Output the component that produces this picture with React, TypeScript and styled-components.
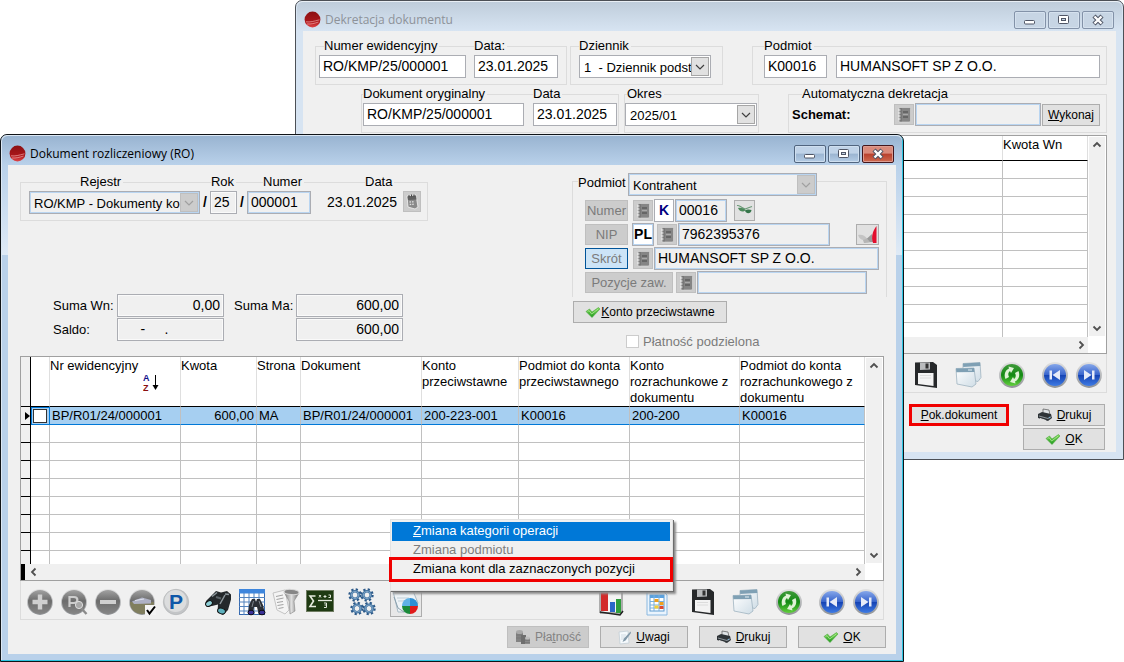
import React, { ReactNode } from "react";
import styled, { createGlobalStyle, css } from "styled-components";

const Global = createGlobalStyle`
  * { box-sizing: border-box; }
  html, body { margin: 0; background: #fff; }
  body, input, select, button, table {
    font-family: "Liberation Sans", Arial, sans-serif;
    font-size: 13px;
    color: #000;
  }
  input, select, button { margin: 0; border-radius: 0; }
`;

/* ---------- window chrome ---------- */

const Desktop = styled.main`
  position: relative;
  min-height: 100vh;
  min-width: 1100px;
  overflow: hidden;
`;

const WindowFrame = styled.section<{ $active?: boolean }>`
  position: absolute;
  display: flex;
  flex-direction: column;
  border: 1px solid ${(p) => (p.$active ? "#101418" : "#4c5056")};
  border-radius: 7px 7px 0 0;
  background: ${(p) => (p.$active ? "#b9d1ea" : "#d7e4f2")};
  ${(p) =>
    p.$active &&
    css`
      background-image: linear-gradient(#b9d1ea 25%, #dfeaf6 100%);
      background-size: 100% 120px;
      background-repeat: no-repeat;
      box-shadow: inset -1px -1px 0 #2cc4e0, inset 1px 1px 0 #dce8f4;
    `}
`;

const BackWindow = styled(WindowFrame)`
  top: 0;
  left: 295px;
  right: 0;
`;

const FrontWindow = styled(WindowFrame)`
  top: 134px;
  left: 0;
  right: 220px;
`;

const TitleBar = styled.header<{ $active?: boolean }>`
  display: flex;
  align-items: center;
  gap: 4px;
  height: 30px;
  padding: 6px 8px 0 7px;
  border-radius: 6px 6px 0 0;
  border-top: 1px solid ${(p) => (p.$active ? "#dce8f4" : "#e9eff5")};
  margin: 0 1px;
  background: ${(p) =>
    p.$active
      ? "linear-gradient(#99b4d1, #b9d1ea)"
      : "linear-gradient(#bfcddb, #d7e4f2)"};
`;

const Title = styled.h1<{ $active?: boolean }>`
  flex: 1;
  margin: 0;
  font: 400 12px/16px "Open Sans", "Noto Sans", sans-serif;
  color: ${(p) => (p.$active ? "#000" : "#8d9299")};
`;

const Controls = styled.div`
  display: flex;
  gap: 2px;
`;

const ControlButton = styled.button<{ $kind: "idle" | "live" | "close" }>`
  display: flex;
  align-items: center;
  justify-content: center;
  width: 32px;
  height: 18px;
  padding: 0;
  border-radius: 2px;
  border: 1px solid
    ${(p) => ({ idle: "#8392a8", live: "#51657f", close: "#43161c" })[p.$kind]};
  box-shadow: inset 0 0 0 1px
    ${(p) => ({ idle: "#d5e1ee", live: "#cfdfef", close: "#dd9c90" })[p.$kind]};
  background: ${(p) =>
    ({
      idle: "#c7d5e4",
      live: "linear-gradient(#c0d3e8 45%, #9bb5d1 50%, #b4cce5)",
      close: "linear-gradient(#d98a7b 45%, #b8402d 50%, #cf6a50)",
    })[p.$kind]};
`;

const Body = styled.div`
  display: flex;
  flex-direction: column;
  margin: 0 7px 7px;
  background: #f0f0f0;
`;

const BackBody = styled(Body)`
  padding: 15px 9px 2px 12px;
`;

const FrontBody = styled(Body)`
  padding: 16px 9px 6px 12px;
`;

/* ---------- form parts ---------- */

const Row = styled.div<{ $gap?: number }>`
  display: flex;
  gap: ${(p) => p.$gap ?? 0}px;
`;

const SecondRow = styled(Row)`
  padding: 9px 0 0 46px;
`;

const Group = styled.div<{ $width?: number; $pad: string; $gap?: number }>`
  display: flex;
  gap: ${(p) => p.$gap ?? 0}px;
  ${(p) => (p.$width ? `flex: 0 0 ${p.$width}px;` : "flex: 1;")}
  min-width: 0;
  padding: ${(p) => p.$pad};
  border: 1px solid #dcdcdc;
`;

const RegisterGroup = styled(Group)`
  flex: none;
`;

const FieldBox = styled.div<{ $width?: number }>`
  display: flex;
  flex-direction: column;
  ${(p) => (p.$width ? `flex: 0 0 ${p.$width}px;` : "flex: 1;")}
  min-width: 0;
  margin-top: -8px;
`;

const Unlabelled = styled(FieldBox)`
  margin-top: 8px;
`;

const Caption = styled.label<{ $align?: "center"; $indent?: number }>`
  align-self: ${(p) => (p.$align === "center" ? "center" : "flex-start")};
  height: 16px;
  line-height: 14px;
  margin-left: ${(p) => p.$indent ?? 0}px;
  padding-right: 2px;
  background: #f0f0f0;
  white-space: nowrap;
`;

type Tone = "plain" | "locked" | "sum" | "tinted";

const toneRules = css<{ $tone?: Tone }>`
  border: 1px solid #abadb3;
  background: ${(p) => (p.$tone === "locked" || p.$tone === "sum" ? "#f0f0f0" : "#fff")};
  box-shadow: ${(p) =>
    p.$tone === "locked" || p.$tone === "tinted"
      ? "inset 0 0 0 1px #b9d5f1"
      : p.$tone === "sum"
        ? "inset 0 0 0 1px #fafafa"
        : "none"};
`;

const TextBox = styled.input<{
  $tone?: Tone;
  $width?: number;
  $right?: boolean;
  $bold?: string;
}>`
  ${toneRules}
  height: 23px;
  padding: 0 3px 1px;
  min-width: 0;
  font-size: 14px;
  outline: none;
  ${(p) => (p.$width ? `flex: 0 0 ${p.$width}px; width: ${p.$width}px;` : "width: 100%;")}
  ${(p) => p.$right && "text-align: right;"}
  ${(p) => p.$bold && `font-weight: 700; color: ${p.$bold}; padding: 0; text-align: center;`}
`;

const Grow = styled(TextBox)`
  flex: 1;
`;

const SelectBox = styled.div<{ $tone?: Tone }>`
  ${toneRules}
  display: flex;
  width: 100%;
  height: 23px;
  padding: 1px;
`;

const NativeSelect = styled.select`
  appearance: none;
  flex: 1;
  width: 0;
  padding: 2px 0 0 3px;
  border: 0;
  outline: none;
  background: transparent;
  text-overflow: clip;
`;

const SelectArrow = styled.span<{ $off?: boolean }>`
  display: flex;
  align-items: center;
  justify-content: center;
  width: 18px;
  border: 1px solid ${(p) => (p.$off ? "#bfbfbf" : "#a6a6a6")};
  background: ${(p) => (p.$off ? "#cccccc" : "#e1e1e1")};
  color: ${(p) => (p.$off ? "#a0a0a0" : "#404040")};
`;

const Slash = styled.span`
  flex: 0 0 10px;
  padding-top: 9px;
  text-align: center;
  font-size: 14px;
  font-weight: 700;
  line-height: 20px;
`;

const DateText = styled.output`
  flex: 1;
  font-size: 14px;
  line-height: 22px;
`;

const IconButton = styled.button<{ $width?: number; $off?: boolean }>`
  display: flex;
  align-items: center;
  justify-content: center;
  flex: 0 0 ${(p) => p.$width ?? 20}px;
  height: 21px;
  padding: 0;
  border: 1px solid ${(p) => (p.$off ? "#bfbfbf" : "#adadad")};
  background: ${(p) => (p.$off ? "#cccccc" : "#e1e1e1")};
`;

const TagButton = styled.button<{ $width?: number; $on?: boolean }>`
  flex: 0 0 ${(p) => p.$width ?? 43}px;
  height: 21px;
  padding: 2px 0 0;
  border: 1px solid ${(p) => (p.$on ? "#005499" : "#bfbfbf")};
  background: ${(p) => (p.$on ? "#cce4f7" : "#cccccc")};
  color: #7b7b7b;
  line-height: 16px;
`;

const PushButton = styled.button<{ $width: number; $off?: boolean; $marked?: boolean }>`
  display: flex;
  align-items: center;
  justify-content: center;
  gap: ${(p) => (p.$width > 120 ? 0 : 4)}px;
  flex: 0 0 ${(p) => p.$width}px;
  width: ${(p) => p.$width}px;
  height: 22px;
  padding: 0;
  border: ${(p) => (p.$marked ? "3px solid #f00000" : `1px solid ${p.$off ? "#bfbfbf" : "#adadad"}`)};
  background: ${(p) => (p.$off ? "#cccccc" : "#e1e1e1")};
  color: ${(p) => (p.$off ? "#838383" : "#000")};
  font-size: 12px;
  white-space: nowrap;
`;

const SchemeRow = styled.div`
  display: flex;
  align-items: center;
  gap: 1px;
`;

const SchemeLabel = styled.label`
  flex: 0 0 101px;
  font-weight: 700;
`;

/* ---------- upper part of the document form ---------- */

const FormTop = styled.div`
  display: flex;
  justify-content: space-between;
  min-height: 175px;
`;

const LeftPane = styled.div`
  display: flex;
  flex-direction: column;
  justify-content: space-between;
  align-items: flex-start;
  padding: 1px 0 15px;
`;

const Sums = styled.div`
  display: grid;
  grid-template-columns: 64px 107px 72px 107px;
  row-gap: 1px;
  align-items: center;
  padding-left: 33px;
`;

const SumLabel = styled.label<{ $second?: boolean }>`
  padding-left: ${(p) => (p.$second ? 10 : 0)}px;
`;

const RightPane = styled.div`
  display: flex;
  flex-direction: column;
  align-items: flex-start;
  width: 315px;
`;

const PartyGroup = styled.div`
  align-self: stretch;
  padding-bottom: 3px;
  border: 1px solid #dcdcdc;
  border-bottom: 0;
`;

const PartyHead = styled.div`
  display: flex;
  align-items: center;
  width: 239px;
  margin: -9px 0 2px 5px;
`;

const PartyLabel = styled.label`
  flex: 0 0 50px;
  background: #f0f0f0;
  line-height: 18px;
  padding-bottom: 3px;
`;

const PartyRow = styled.div`
  display: flex;
  align-items: center;
  gap: 1px;
  height: 24px;
  padding: 0 7px 0 12px;
`;

const Gap = styled.span<{ $w?: number }>`
  ${(p) => (p.$w ? `flex: 0 0 ${p.$w}px;` : "flex: 1;")}
`;

const CheckLine = styled.label`
  display: flex;
  align-items: center;
  gap: 4px;
  margin: 11px 0 0 54px;
  color: #7b7b7b;
`;

const Tick = styled.input`
  appearance: none;
  flex: none;
  width: 13px;
  height: 13px;
  margin: 0;
  border: 1px solid #cccccc;
  background: #fff;
`;

const KontoButton = styled(PushButton)`
  margin: 4px 0 0 1px;
  flex: none;
`;

/* ---------- grids ---------- */

const GridFrame = styled.div`
  display: grid;
  grid-template-columns: minmax(0, 1fr) 18px;
  border: 1px solid #a0a0a0;
  background: #fff;
`;

const FrontArea = styled.div`
  margin-right: 3px;
`;

const BackArea = styled.div`
  padding-top: 2px;
`;

const DataTable = styled.table`
  width: 100%;
  table-layout: fixed;
  border-collapse: separate;
  border-spacing: 0;
  background: #fff;
`;

const HeadCell = styled.th<{ $selector?: boolean; $height: number }>`
  height: ${(p) => p.$height}px;
  padding: 1px 0 0;
  vertical-align: top;
  text-align: left;
  font-weight: 400;
  line-height: 16px;
  white-space: nowrap;
  border-right: 1px solid ${(p) => (p.$selector ? "#000" : "#dfdfdf")};
  border-bottom: 1px solid #000;
  background: ${(p) => (p.$selector ? "#f0f0f0" : "#fff")};
`;

const Cell = styled.td<{ $selected?: boolean; $last?: number | false; $right?: boolean }>`
  height: ${(p) => p.$last || 18}px;
  padding: 0 2px;
  line-height: 15px;
  white-space: nowrap;
  text-align: ${(p) => (p.$right ? "right" : "left")};
  border-right: 1px solid #c0c0c0;
  border-bottom: ${(p) => (p.$last ? 0 : 1)}px solid ${(p) => (p.$selected ? "#0078d7" : "#c0c0c0")};
  background: ${(p) => (p.$selected ? "#a6cff1" : "#fff")};
`;

const SelectorCell = styled(Cell)`
  padding: 0;
  border-right-color: #000;
  border-bottom-color: #000;
  background: #f0f0f0;
  text-align: right;
`;

const MarkCell = styled(Cell)`
  padding: 0;
  border: 1px solid #0078d7;
`;

const RowTick = styled.input`
  appearance: none;
  display: block;
  width: 14px;
  height: 14px;
  margin: 0 1px;
  border: 1px solid #333;
  background: #fff;
`;

const SortMark = styled.span`
  display: block;
  padding-right: 20px;
  text-align: right;
`;

const VScroll = styled.div`
  display: flex;
  flex-direction: column;
  justify-content: space-between;
  align-items: center;
  margin: 1px;
  padding: 3px 0;
  background: #f0f0f0;
`;

const HScroll = styled.div<{ $thumb?: boolean }>`
  display: flex;
  justify-content: space-between;
  align-items: center;
  height: 16px;
  padding: 0 2px 0 4px;
  border-left: ${(p) => (p.$thumb ? 4 : 0)}px solid #000;
  background: #f0f0f0;
`;

const ToolPanel = styled.div`
  display: flex;
  align-items: center;
  justify-content: space-between;
  height: 39px;
  padding: 4px 3px 0 5px;
  border: 1px solid #dcdcdc;
  border-top: 0;
`;

const Tools = styled.div<{ $gap: number }>`
  display: flex;
  align-items: center;
  gap: ${(p) => p.$gap}px;
`;

const RightTools = styled(Tools)`
  margin-left: auto;
`;

const ReportTools = styled(Tools)`
  padding-right: 3px;
`;

const ToolButton = styled.button`
  display: block;
  width: 28px;
  height: 28px;
  padding: 0;
  border: 0;
  background: transparent;
`;

const MenuAnchor = styled.div`
  position: relative;
  width: 32px;
  height: 30px;
`;

const MenuTrigger = styled(ToolButton)`
  width: 32px;
  height: 30px;
  border: 1px solid #adadad;
  background: #e8e8e8;
`;

const Menu = styled.ul`
  position: absolute;
  z-index: 2;
  left: 0;
  bottom: 26px;
  width: 283px;
  margin: 0;
  padding: 2px 2px 11px 1px;
  list-style: none;
  border: 1px solid #e3e3e3;
  background: #f0f0f0;
  box-shadow: 1px 1px 0 #6d6d6d, 3px 3px 2px #8d8d8d;
`;

const MenuItem = styled.button<{ $look?: "hot" | "off" | "marked" }>`
  display: block;
  width: 278px;
  height: 19px;
  padding: 0 0 2px 21px;
  border: 0;
  text-align: left;
  background: ${(p) => (p.$look === "hot" ? "#0078d7" : "transparent")};
  color: ${(p) => (p.$look === "hot" ? "#fff" : p.$look === "off" ? "#7d7d7d" : "#000")};
  outline: ${(p) => (p.$look === "marked" ? "3px solid #f00000" : "none")};
`;

const Footer = styled.div`
  display: flex;
  justify-content: flex-end;
  gap: 11px;
  padding: 6px 1px 0 0;
`;

const BackFooter = styled.div`
  display: grid;
  grid-template-columns: 100px 82px;
  justify-content: end;
  gap: 2px 14px;
  padding: 11px 2px 0 0;
`;

const SecondColumn = styled.div`
  grid-column: 2;
`;

/* ---------- icons ---------- */

const HiddenSvg = styled.svg`
  position: absolute;
`;

const Defs = () => (
  <HiddenSvg width="0" height="0" aria-hidden="true">
    <defs>
      <linearGradient id="gray" x1="0" y1="0" x2="0" y2="1">
        <stop offset="0" stopColor="#a2a2a2" />
        <stop offset="0.45" stopColor="#6c6c6c" />
        <stop offset="1" stopColor="#868686" />
      </linearGradient>
      <linearGradient id="rim" x1="0" y1="0" x2="0" y2="1">
        <stop offset="0" stopColor="#e2e2e2" />
        <stop offset="1" stopColor="#8f9296" />
      </linearGradient>
      <linearGradient id="blue" x1="0" y1="0" x2="0" y2="1">
        <stop offset="0" stopColor="#86a7ea" />
        <stop offset="0.48" stopColor="#3a66cd" />
        <stop offset="0.52" stopColor="#1644b4" />
        <stop offset="1" stopColor="#3e7be4" />
      </linearGradient>
      <linearGradient id="green" x1="0" y1="0" x2="0" y2="1">
        <stop offset="0" stopColor="#3f9a3a" />
        <stop offset="0.5" stopColor="#138a14" />
        <stop offset="1" stopColor="#62cf3d" />
      </linearGradient>
      <linearGradient id="red" x1="0" y1="0" x2="0" y2="1">
        <stop offset="0" stopColor="#8c1012" />
        <stop offset="0.6" stopColor="#a8161a" />
        <stop offset="1" stopColor="#e04548" />
      </linearGradient>
      <linearGradient id="check" x1="0" y1="0" x2="0" y2="1">
        <stop offset="0" stopColor="#7ed957" />
        <stop offset="1" stopColor="#1f9a1f" />
      </linearGradient>
      <linearGradient id="paper" x1="0" y1="0" x2="1" y2="1">
        <stop offset="0" stopColor="#ffffff" />
        <stop offset="1" stopColor="#cfdde6" />
      </linearGradient>
      <linearGradient id="funnel" x1="0" y1="0" x2="1" y2="0">
        <stop offset="0" stopColor="#7e7e7e" />
        <stop offset="0.5" stopColor="#dedede" />
        <stop offset="1" stopColor="#6c6c6c" />
      </linearGradient>
    </defs>
  </HiddenSvg>
);

const Icon = ({ size = 28, w, h, children }: { size?: number; w?: number; h?: number; children: ReactNode }) => (
  <svg
    width={w ?? size}
    height={h ?? size}
    viewBox={`0 0 ${w ?? size} ${h ?? size}`}
    aria-hidden="true"
  >
    {children}
  </svg>
);

const LogoIcon = () => (
  <Icon size={17}>
    <circle cx="8.5" cy="8.5" r="7.9" fill="url(#red)" />
    <path d="M2 10.800c4 .6 8-.6 13.500-2M3 13c4 .4 8-.8 11.500-2" fill="none" stroke="#f0a3a3" strokeWidth=".7" />
  </Icon>
);

const ChevronIcon = ({ dir = "down" }: { dir?: "down" | "up" | "left" | "right" }) => {
  const d = {
    down: "M1.500 3.500L5 7l3.500-3.500",
    up: "M1.500 6.500L5 3l3.500 3.500",
    left: "M6.500 1.500L3 5l3.500 3.500",
    right: "M3.500 1.500L7 5l-3.500 3.500",
  }[dir];
  return (
    <Icon size={10}>
      <path d={d} fill="none" stroke="#505050" strokeWidth="1.800" />
    </Icon>
  );
};

const ThinChevron = () => (
  <Icon w={10} h={8}>
    <path d="M1 2l4 4 4-4" fill="none" stroke="currentColor" strokeWidth="1.200" />
  </Icon>
);

const MinimizeIcon = () => (
  <Icon w={12} h={12}>
    <rect x=".5" y="6.500" width="10" height="3.500" rx="1" fill="#fff" stroke="#4f5565" />
  </Icon>
);

const MaximizeIcon = () => (
  <Icon w={12} h={12}>
    <rect x=".5" y="1.500" width="10" height="8" rx="1" fill="#fff" stroke="#4f5565" />
    <rect x="3.500" y="4.500" width="4" height="2" fill="#c3d2e3" stroke="#4f5565" />
  </Icon>
);

const CloseIcon = () => (
  <Icon w={12} h={12}>
    <path d="M2 2l8 8M10 2l-8 8" stroke="#4f5565" strokeWidth="4.400" />
    <path d="M2.500 2.500l7 7M9.500 2.500l-7 7" stroke="#fff" strokeWidth="2.400" />
  </Icon>
);

const BookIcon = () => (
  <Icon w={16} h={17}>
    <path d="M3 1.500h10.500l1 1v12.500l-1 1H3z" fill="#858585" stroke="#dedede" strokeWidth=".6" />
    <path d="M5 2v13.500" stroke="#6a6a6a" />
    <path d="M2 4h2.500M2 7h2.500M2 10h2.500M2 13h2.500" stroke="#f0f0f0" />
    <path d="M7 6h5M7 11h5" stroke="#5c5c5c" strokeWidth="1.500" />
    <path d="M7 8.500h5" stroke="#a8a8a8" />
  </Icon>
);

const CalendarIcon = () => (
  <Icon w={14} h={17}>
    <path d="M2 3l9-1 2 12-3 2-7-2z" fill="#8a8a8a" stroke="#f2f2f2" strokeWidth=".8" />
    <path d="M2.500 3.500l8.500-1 .5 4-8.500.5z" fill="#606060" />
    <path d="M4 2v2M6.500 1.500v2M9 1.500v2" stroke="#444" />
    <path d="M4.500 9l5-.3M4.700 11.500l5-.3" stroke="#dedede" strokeDasharray="1.500 1" strokeWidth="1.300" />
  </Icon>
);

const GlassesIcon = () => (
  <Icon w={18} h={14}>
    <path d="M1 2.500c2-.5 3 1 5 2l3 1.500c3-1 5-2 7-2.500" fill="none" stroke="#6c9a78" strokeWidth="1.100" />
    <path d="M2 5c3-.6 6 .4 7.500 2-1.500 2.400-6 2-7.500-2z" fill="#4d8a5c" />
    <path d="M9 7.500c2-1.500 5-1.200 6.500-.5-.5 4-5.500 4.500-6.500.5z" fill="#35754a" />
  </Icon>
);

const RegisterIcon = () => (
  <Icon w={21} h={19}>
    <path d="M1 10c4-1 7 1 9 3.500-2 3-7 2-9-3.500z" fill="#c4c4c4" />
    <path d="M10 13.500l5-4.500 1 8-9 .5z" fill="#9a9a9a" />
    <path d="M6 15l4-1.500L13 17l-6 1z" fill="#b5b5b5" />
    <path d="M19.500 1v17h-3.500c-2-6-.5-12 3.500-17z" fill="#e20d2c" />
  </Icon>
);

const CheckIcon = () => (
  <Icon w={16} h={13}>
    <path d="M1 5.500l3.500-2.500 2.500 3L13.500 1.500l1.500 1.500L7 11.500z" fill="url(#check)" stroke="#4fa83f" strokeWidth=".6" />
    <path d="M2.500 5.600l1.500-1L6.700 8l6.500-5" fill="none" stroke="#b4eb98" strokeWidth=".8" />
  </Icon>
);

const PrinterIcon = () => (
  <Icon w={16} h={14}>
    <path d="M6 1l6 1 1 5-7-1z" fill="#dfe3e6" stroke="#555" strokeWidth=".7" />
    <path d="M1 6l4-2 9 2 1 4-4 3-10-3z" fill="#2f3438" />
    <path d="M2 8l9 2.500 3.500-2" fill="none" stroke="#8f979c" />
    <path d="M3 10.500l6 2" stroke="#e5e5e5" />
    <circle cx="12.500" cy="9.500" r=".8" fill="#7fb4d8" />
  </Icon>
);

const CoinsIcon = () => (
  <Icon w={16} h={17}>
    <path d="M1 3h7v10H1z" fill="#838383" />
    <ellipse cx="4.500" cy="3" rx="3.500" ry="2" fill="#a9a9a9" />
    <path d="M6 6h5v9H6z" fill="#6e6e6e" />
    <path d="M10 9h5v6h-5z" fill="#8a8a8a" />
    <ellipse cx="12.500" cy="9" rx="2.500" ry="1.500" fill="#bdbdbd" />
    <path d="M1 6h7M1 9h7M10 11.500h5M10 13.500h5" stroke="#727272" strokeWidth=".7" />
  </Icon>
);

const NoteIcon = () => (
  <Icon w={14} h={16}>
    <path d="M1 3l9-1 1 12-9 1z" fill="#f5f9fc" stroke="#c3ced6" strokeWidth=".8" />
    <path d="M3 6h5M3 8h4M3 10h4" stroke="#c9d5de" strokeWidth=".8" />
    <path d="M4.500 13l1.500-3.500L12.500 2.500l.5 1.500L7.500 11.500z" fill="#8399a9" />
  </Icon>
);

const Disc = ({ fill }: { fill?: string }) => (
  <>
    <circle cx="14" cy="14" r="12.900" fill="url(#rim)" />
    <circle cx="14" cy="14" r={fill ? 11 : 12} fill={fill ?? "url(#gray)"} />
  </>
);

const AddIcon = () => (
  <Icon>
    <Disc />
    <path d="M11.800 6.500h4.400v5.300h5.300v4.400h-5.300v5.300h-4.400v-5.300H6.500v-4.400h5.300z" fill="#cfcfcf" />
  </Icon>
);

const FindIcon = () => (
  <Icon>
    <Disc />
    <path d="M9.500 19V9h4.500c4.500 0 4.500 6 0 6h-4" fill="none" stroke="#cdcdcd" strokeWidth="2.200" />
    <circle cx="19" cy="17" r="3.600" fill="#a9a9a9" stroke="#dedede" />
    <path d="M21.500 20.500l5 5.500" stroke="#8b8b8b" strokeWidth="2.400" />
  </Icon>
);

const RemoveIcon = () => (
  <Icon>
    <Disc />
    <path d="M6 12h16v4H6z" fill="#cfcfcf" />
  </Icon>
);

const RemoveMarkedIcon = () => (
  <Icon>
    <Disc />
    <path d="M2 14h24c0 7-5 12-12 12S2 21 2 14z" fill="#807e5e" />
    <path d="M4 13.500l10-4 9 2.500v3.500l-17 .5z" fill="#aeb1c4" />
    <path d="M7 12.500l9-1.500" stroke="#dfe2ee" />
    <rect x="17" y="17" width="11" height="10" fill="#f4f4f4" />
    <path d="M19 22l2.500 3.500L27 18.500" fill="none" stroke="#000" strokeWidth="2" />
  </Icon>
);

const LetterText = styled.text`
  font-family: "Liberation Sans", Arial, sans-serif;
  font-weight: 700;
`;

const ParkIcon = () => (
  <Icon>
    <circle cx="14" cy="14" r="12.700" fill="#c3c5c7" stroke="#aeb0b2" strokeWidth=".6" />
    <circle cx="13.500" cy="13" r="11" fill="#dcddde" />
    <LetterText x="7" y="21" fontSize="21" fill="#0f57a8">P</LetterText>
  </Icon>
);

const BinocularsIcon = () => (
  <Icon>
    <path d="M2 13L12 3l5 1.500L23 3l4 3.500v5L24 22l-5 5-5.500-3 .5-7.500-6 1.500-5 .5-1.500-3z" fill="#24282b" />
    <path d="M8 8.500l5-4M21 6l4 .5M16 16l5-9" stroke="#8d979d" strokeWidth="1.500" />
    <path d="M12 9l5 1.500" stroke="#5a6267" strokeWidth="2" />
    <ellipse cx="5" cy="15.500" rx="3.600" ry="2.600" fill="#8fd0d8" stroke="#111" transform="rotate(-30 5 15.500)" />
    <ellipse cx="17.500" cy="23" rx="4" ry="2.800" fill="#5eb0bd" stroke="#111" transform="rotate(20 17.500 23)" />
  </Icon>
);

const TableFindIcon = () => (
  <Icon>
    <rect x="1.500" y="1.500" width="25" height="25" fill="#fff" stroke="#3569b0" />
    <rect x="1" y="1" width="26" height="4.500" fill="#3e86dd" />
    <path d="M6 5v22M11 5v22M16 5v22M21 5v22M1 9.500h26M1 14h26M1 18.500h26M1 23h26" stroke="#5383bd" />
    <path d="M10 26l1-9 3-6h3l1 3 1-3h3l3 6 2 9-6 1-2-8-3 0-1 7z" fill="#2b2f35" />
    <ellipse cx="13" cy="24.500" rx="3" ry="2.300" fill="#3a3199" stroke="#0d0d15" />
    <ellipse cx="24" cy="24.500" rx="3" ry="2.300" fill="#3a3199" stroke="#0d0d15" />
    <path d="M15.500 13l-1.500 6M21 13l2 6" stroke="#7d858c" />
  </Icon>
);

const FilterIcon = () => (
  <Icon>
    <path d="M1 5l12-3 4 20-4 4-8-4z" fill="#f4f4f4" stroke="#c4c4c4" />
    <path d="M4 8.500l7-1.500M4.500 11.500l7-1.500M5 14.500l6-1M5.500 17.500l6-1M6.500 20.500l5-1" stroke="#a2a2a2" />
    <path d="M12 4l15 1-5 8 1 10-5 3-1-13z" fill="url(#funnel)" stroke="#868686" strokeWidth=".6" />
    <ellipse cx="19.500" cy="4" rx="7.500" ry="2.600" fill="#868686" stroke="#d8d8d8" transform="rotate(4 19.500 4)" />
  </Icon>
);

const FormulaIcon = () => (
  <Icon>
    <rect x=".5" y="2.500" width="27" height="21" fill="#1e3a12" stroke="#6f7c62" />
    <path d="M9.500 8H4l3.500 5L4 18.500h6" fill="none" stroke="#e6ebdf" strokeWidth="1.600" />
    <path d="M12 12.500h14" stroke="#e6ebdf" strokeWidth="1.300" />
    <path d="M13 7l2 2.500M15 7l-2 2.500M17.500 8.500h3M19 7v3M22.500 7h2v2.500h-2M18 15h2.500v2H18.500M20.500 17v2.500H18" fill="none" stroke="#dfe6d8" />
  </Icon>
);

const Gear = ({ x, y }: { x: number; y: number }) => (
  <g transform={`translate(${x} ${y})`}>
    <circle r="5.600" fill="none" stroke="#2b5888" strokeWidth="2.200" strokeDasharray="2.200 2.200" />
    <circle r="3.700" fill="none" stroke="#3f719f" strokeWidth="2.600" />
    <circle r="3.600" fill="none" stroke="#9dbcd8" strokeWidth=".7" />
  </g>
);

const GearsIcon = () => (
  <Icon>
    <Gear x={7} y={7} />
    <Gear x={19} y={7} />
    <Gear x={9} y={20.5} />
    <Gear x={21} y={20.5} />
  </Icon>
);

const ReportIcon = () => (
  <Icon w={30} h={28}>
    <path d="M2 3h20l5 12-6 9H7z" fill="#eef3f6" stroke="#a9bac5" />
    <path d="M6 10h12M7 13h9" stroke="#c1ced6" />
    <path d="M3 9l4 11 6 4" fill="none" stroke="#8ba1ae" />
    <path d="M19 18v-8a8 8 0 0 0-8 8z" fill="#5fb2e6" />
    <path d="M19 18v-8a8 8 0 0 1 8 8z" fill="#2d8fd5" />
    <path d="M19 18h-8a8 8 0 0 0 8 8z" fill="#1a8a3a" />
    <path d="M19 18h8a8 8 0 0 1-8 8z" fill="#e01a1a" />
  </Icon>
);

const ChartIcon = () => (
  <Icon>
    <path d="M2 2l22 1v22L2 25z" fill="#f4f4f4" stroke="#6a6a6a" />
    <path d="M3 3h7v20H3z" fill="#d22a2a" />
    <path d="M12 14h5v10h-5z" fill="#2c67c9" />
    <path d="M18 11h5v14h-5z" fill="#2f9e3d" />
    <path d="M2 24l20 3 3-4" fill="none" stroke="#222" strokeWidth="1.500" />
  </Icon>
);

const SheetIcon = () => (
  <Icon>
    <path d="M4 1h14l6 6v20H4z" fill="#eaf4fd" stroke="#8ab8e0" />
    <rect x="7" y="7" width="14" height="16" fill="#fff" stroke="#5f9bd0" />
    <path d="M7 7h14v3H7z" fill="#5aa2e0" />
    <path d="M7 13.500h14M7 17h14M7 20h14M11 7v16M16 7v16" stroke="#78b0df" />
    <path d="M11.500 11h4v3h-4zM16.500 14h4v3h-4z" fill="#f0a01c" />
    <path d="M16.500 18h4v3h-4z" fill="#e0482e" />
    <path d="M11.500 17.500h4v3h-4z" fill="#f5cf35" />
  </Icon>
);

const SaveIcon = () => (
  <Icon>
    <path d="M3 1.500l18-.5 4 3v23L3 24z" fill="#26282a" />
    <path d="M8 1.500h10v7L8 9z" fill="#b9bbbd" />
    <path d="M13.500 2.500h3v5h-3z" fill="#333" />
    <path d="M6 12h15.500v13L6 23z" fill="#f3f3f3" />
    <path d="M8 14.500h11M8 17h11" stroke="#dcdcdc" />
  </Icon>
);

const WindowsIcon = () => (
  <Icon>
    <path d="M8 2.500l17-1 1 15-3 4-15-3z" fill="url(#paper)" stroke="#9fb4c0" strokeWidth=".8" />
    <path d="M8 2.500l17-1 .3 3.500L8.200 6z" fill="#7fa0b4" />
    <path d="M1 7.500l18-.5 2 16-4 3-15-3z" fill="url(#paper)" stroke="#9fb4c0" strokeWidth=".8" />
    <path d="M1 7.500l18-.5.500 4-18.200.3z" fill="#7fa0b4" />
    <path d="M13 9h4" stroke="#e4eef4" />
  </Icon>
);

const RefreshIcon = () => (
  <Icon>
    <Disc fill="url(#green)" />
    <path d="M7.500 18c-2-5 0-9 3.500-10.500l-.5-2 5.500 1.500-3 5-1-2c-1.500 1-2.500 3-1 6z" fill="#dff2d6" />
    <path d="M20.500 10c2 5 0 9-3.500 10.500l.5 2-5.500-1.500 3-5 1 2c1.500-1 2.500-3 1-6z" fill="#dff2d6" />
  </Icon>
);

const SkipIcon = ({ forward }: { forward?: boolean }) => (
  <Icon>
    <Disc fill="url(#blue)" />
    <g transform={forward ? "translate(28 0) scale(-1 1)" : undefined}>
      <path d="M8.500 9.500h2.500v9H8.500zM19 9v10l-7.500-5z" fill="#e6ebf8" />
    </g>
  </Icon>
);

const SortIcon = () => (
  <Icon w={17} h={18}>
    <LetterText x="0" y="7" fontSize="9" fill="#10108a">A</LetterText>
    <LetterText x="0" y="17" fontSize="9" fill="#8a1010">Z</LetterText>
    <path d="M12.500 1v13" stroke="#000" />
    <path d="M9.500 11h6l-3 5z" fill="#000" />
  </Icon>
);

const PointerIcon = () => (
  <Icon w={5} h={8}>
    <path d="M0 0l5 4-5 4z" fill="#000" />
  </Icon>
);

/* ---------- composed parts ---------- */

const WindowControls = ({ active }: { active?: boolean }) => (
  <Controls>
    <ControlButton $kind={active ? "live" : "idle"} aria-label="Minimalizuj"><MinimizeIcon /></ControlButton>
    <ControlButton $kind={active ? "live" : "idle"} aria-label="Maksymalizuj"><MaximizeIcon /></ControlButton>
    <ControlButton $kind={active ? "close" : "idle"} aria-label="Zamknij"><CloseIcon /></ControlButton>
  </Controls>
);

type FieldProps = {
  id: string;
  label: string;
  value?: string;
  width?: number;
  indent?: number;
  align?: "center";
  tone?: Tone;
  children?: ReactNode;
};

const Field = ({ id, label, value, width, indent, align, tone, children }: FieldProps) => (
  <FieldBox $width={width}>
    <Caption htmlFor={id} $indent={indent} $align={align}>{label}</Caption>
    {children ?? <TextBox id={id} defaultValue={value} $tone={tone} />}
  </FieldBox>
);

const DropDown = ({ id, value, locked }: { id: string; value: string; locked?: boolean }) => (
  <SelectBox $tone={locked ? "locked" : "plain"}>
    <NativeSelect id={id}>
      <option>{value}</option>
    </NativeSelect>
    <SelectArrow $off={locked}><ThinChevron /></SelectArrow>
  </SelectBox>
);

const BookButton = () => (
  <IconButton $off aria-label="Wybierz z listy"><BookIcon /></IconButton>
);

const Key = ({ text }: { text: string }) => {
  const at = text.indexOf("_");
  return (
    <span>
      {text.slice(0, at)}
      <u>{text[at + 1]}</u>
      {text.slice(at + 2)}
    </span>
  );
};

const Tool = ({ label, children }: { label: string; children: ReactNode }) => (
  <ToolButton aria-label={label}>{children}</ToolButton>
);

const NavigationTools = () => (
  <>
    <Tool label="Zapisz"><SaveIcon /></Tool>
    <Tool label="Okna"><WindowsIcon /></Tool>
    <Tool label="Odśwież"><RefreshIcon /></Tool>
    <Tools $gap={6}>
      <Tool label="Pierwszy"><SkipIcon /></Tool>
      <Tool label="Ostatni"><SkipIcon forward /></Tool>
    </Tools>
  </>
);

const PostingHeader = () => (
  <>
    <Row $gap={3}>
      <Group $width={252} $pad="0 3px 6px 3px" $gap={8}>
        <Field id="ewid" label="Numer ewidencyjny" value="RO/KMP/25/000001" width={147} indent={5} />
        <Field id="data1" label="Data:" value="23.01.2025" width={84} />
      </Group>
      <Group $width={153} $pad="0 8px 6px 8px">
        <Field id="dziennik" label="Dziennik" width={132}>
          <DropDown id="dziennik" value={"1\u00a0 - Dziennik podstawowy"} />
        </Field>
      </Group>
      <Gap $w={23} />
      <Group $pad="0 6px 6px 11px" $gap={9}>
        <Field id="podmiot" label="Podmiot" value="K00016" width={63} />
        <Unlabelled>
          <TextBox aria-label="Nazwa podmiotu" defaultValue="HUMANSOFT SP Z O.O." />
        </Unlabelled>
      </Group>
    </Row>
    <SecondRow $gap={5}>
      <Group $width={258} $pad="0 1px 6px 1px" $gap={9}>
        <Field id="oryg" label="Dokument oryginalny" value="RO/KMP/25/000001" width={161} />
        <Field id="data2" label="Data" value="23.01.2025" width={84} />
      </Group>
      <Group $width={135} $pad="0 1px 6px 0">
        <Field id="okres" label="Okres" width={132} indent={2}>
          <DropDown id="okres" value="2025/01" />
        </Field>
      </Group>
      <Gap $w={19} />
      <Group $pad="0 6px 6px 3px">
        <FieldBox>
          <Caption as="span" $indent={10}>Automatyczna dekretacja</Caption>
          <SchemeRow>
            <SchemeLabel htmlFor="schemat">Schemat:</SchemeLabel>
            <BookButton />
            <Grow id="schemat" $tone="locked" />
            <PushButton $width={58}><Key text="_Wykonaj" /></PushButton>
          </SchemeRow>
        </FieldBox>
      </Group>
    </SecondRow>
  </>
);

const PostingWindow = () => (
  <BackWindow>
    <TitleBar>
      <LogoIcon />
      <Title>Dekretacja dokumentu</Title>
      <WindowControls />
    </TitleBar>
    <BackBody>
      <PostingHeader />
      <BackArea>
        <GridFrame>
          <DataTable>
            <colgroup>
              <col />
              <col width={85} />
            </colgroup>
            <thead>
              <tr>
                <HeadCell $height={25} aria-label="Opis" />
                <HeadCell $height={25}>Kwota Wn</HeadCell>
              </tr>
            </thead>
            <tbody>
              {Array.from({ length: 10 }, (_, i) => (
                <tr key={i}>
                  <Cell $last={i === 9 && 14} />
                  <Cell $last={i === 9 && 14} />
                </tr>
              ))}
            </tbody>
          </DataTable>
          <VScroll><ChevronIcon dir="up" /><ChevronIcon /></VScroll>
          <HScroll><ChevronIcon dir="left" /><ChevronIcon dir="right" /></HScroll>
        </GridFrame>
        <ToolPanel>
          <RightTools $gap={15}><NavigationTools /></RightTools>
        </ToolPanel>
      </BackArea>
      <BackFooter>
        <PushButton $width={100} $marked><Key text="_Pok.dokument" /></PushButton>
        <PushButton $width={82}><PrinterIcon /><Key text="_Drukuj" /></PushButton>
        <SecondColumn>
          <PushButton $width={82}><CheckIcon /><Key text="_OK" /></PushButton>
        </SecondColumn>
      </BackFooter>
    </BackBody>
  </BackWindow>
);

const columns: { width?: number; lines: string[]; value: string; right?: boolean }[] = [
  { width: 131, lines: ["Nr ewidencyjny"], value: "BP/R01/24/000001" },
  { width: 76, lines: ["Kwota"], value: "600,00", right: true },
  { width: 44, lines: ["Strona"], value: "MA" },
  { width: 121, lines: ["Dokument"], value: "BP/R01/24/000001" },
  { width: 97, lines: ["Konto", "przeciwstawne"], value: "200-223-001" },
  { width: 111, lines: ["Podmiot do konta", "przeciwstawnego"], value: "K00016" },
  { width: 110, lines: ["Konto", "rozrachunkowe z", "dokumentu"], value: "200-200" },
  { lines: ["Podmiot do konta", "rozrachunkowego z", "dokumentu"], value: "K00016" },
];

const PositionsTable = () => (
  <DataTable>
    <colgroup>
      <col width={10} />
      <col width={19} />
      {columns.map((c, i) => <col key={i} width={c.width} />)}
    </colgroup>
    <thead>
      <tr>
        <HeadCell $height={50} $selector aria-label="Wiersz" />
        <HeadCell $height={50} aria-label="Zaznaczenie" />
        {columns.map((c, i) => (
          <HeadCell key={i} $height={50}>
            {c.lines.map((line) => <div key={line}>{line}</div>)}
            {i === 0 && <SortMark><SortIcon /></SortMark>}
          </HeadCell>
        ))}
      </tr>
    </thead>
    <tbody>
      <tr>
        <SelectorCell><PointerIcon /></SelectorCell>
        <MarkCell $selected><RowTick type="checkbox" aria-label="Zaznacz pozycję" /></MarkCell>
        {columns.map((c, i) => (
          <Cell key={i} $selected $right={c.right}>{c.value}</Cell>
        ))}
      </tr>
      {Array.from({ length: 8 }, (_, r) => (
        <tr key={r}>
          <SelectorCell $last={r === 7 && 13} />
          <Cell $last={r === 7 && 13} />
          {columns.map((_c, i) => <Cell key={i} $last={r === 7 && 13} />)}
        </tr>
      ))}
    </tbody>
  </DataTable>
);

const PartyPanel = () => (
  <RightPane>
    <PartyGroup>
      <PartyHead>
        <PartyLabel htmlFor="typ">Podmiot</PartyLabel>
        <DropDown id="typ" value="Kontrahent" locked />
      </PartyHead>
      <PartyRow>
        <TagButton>Numer</TagButton>
        <Gap $w={3} />
        <BookButton />
        <TextBox aria-label="Rodzaj" defaultValue="K" $width={20} $bold="#000080" />
        <TextBox aria-label="Numer podmiotu" defaultValue="00016" $width={52} $tone="locked" />
        <Gap $w={5} />
        <IconButton $width={21} aria-label="Podgląd"><GlassesIcon /></IconButton>
      </PartyRow>
      <PartyRow>
        <TagButton>NIP</TagButton>
        <Gap $w={2} />
        <TextBox aria-label="Kraj" defaultValue="PL" $width={22} $tone="tinted" $bold="#000" />
        <Gap $w={1} />
        <BookButton />
        <TextBox aria-label="Numer NIP" defaultValue="7962395376" $width={152} $tone="locked" />
        <Gap />
        <IconButton $width={23} aria-label="Sprawdź w rejestrze"><RegisterIcon /></IconButton>
      </PartyRow>
      <PartyRow>
        <TagButton $on>Skrót</TagButton>
        <Gap $w={3} />
        <BookButton />
        <Grow aria-label="Skrót nazwy" defaultValue="HUMANSOFT SP Z O.O." $tone="locked" />
      </PartyRow>
      <PartyRow>
        <TagButton $width={88}>Pozycje zaw.</TagButton>
        <Gap $w={1} />
        <BookButton />
        <TextBox aria-label="Pozycje zawierające" $width={170} $tone="locked" />
      </PartyRow>
    </PartyGroup>
    <KontoButton $width={154}><CheckIcon /><Key text="_Konto przeciwstawne" /></KontoButton>
    <CheckLine>
      <Tick type="checkbox" />
      Płatność podzielona
    </CheckLine>
  </RightPane>
);

const ActionsMenu = () => (
  <MenuAnchor>
    <MenuTrigger aria-label="Operacje"><ReportIcon /></MenuTrigger>
    <Menu>
      <li><MenuItem $look="hot"><Key text="_Zmiana kategorii operacji" /></MenuItem></li>
      <li><MenuItem $look="off">Zmiana podmiotu</MenuItem></li>
      <li><MenuItem $look="marked">Zmiana kont dla zaznaczonych pozycji</MenuItem></li>
    </Menu>
  </MenuAnchor>
);

const SettlementWindow = () => (
  <FrontWindow $active>
    <TitleBar $active>
      <LogoIcon />
      <Title $active>Dokument rozliczeniowy (RO)</Title>
      <WindowControls active />
    </TitleBar>
    <FrontBody>
      <FormTop>
        <LeftPane>
          <RegisterGroup $pad="0 6px 6px 8px">
            <Field id="rejestr" label="Rejestr" width={171} indent={51}>
              <DropDown id="rejestr" value="RO/KMP - Dokumenty korygujące" locked />
            </Field>
            <Slash>/</Slash>
            <Field id="rok" label="Rok" value="25" width={27} align="center" tone="sum" />
            <Slash>/</Slash>
            <Field id="numer" label="Numer" value="000001" width={64} indent={16} tone="locked" />
            <Gap $w={16} />
            <Field id="data3" label="Data" width={94} indent={38}>
              <Row>
                <DateText id="data3">23.01.2025</DateText>
                <IconButton $width={18} $off aria-label="Kalendarz"><CalendarIcon /></IconButton>
              </Row>
            </Field>
          </RegisterGroup>
          <Sums>
            <SumLabel htmlFor="wn">Suma Wn:</SumLabel>
            <TextBox id="wn" defaultValue="0,00" $tone="sum" $right />
            <SumLabel htmlFor="ma" $second>Suma Ma:</SumLabel>
            <TextBox id="ma" defaultValue="600,00" $tone="sum" $right />
            <SumLabel htmlFor="saldo">Saldo:</SumLabel>
            <TextBox id="saldo" defaultValue="     -     ." $tone="sum" />
            <span />
            <TextBox aria-label="Saldo Ma" defaultValue="600,00" $tone="sum" $right />
          </Sums>
        </LeftPane>
        <PartyPanel />
      </FormTop>
      <FrontArea>
        <GridFrame>
          <PositionsTable />
          <VScroll><ChevronIcon dir="up" /><ChevronIcon /></VScroll>
          <HScroll $thumb><ChevronIcon dir="left" /><ChevronIcon dir="right" /></HScroll>
        </GridFrame>
        <ToolPanel>
          <Tools $gap={14}>
            <Tools $gap={6}>
              <Tool label="Dodaj"><AddIcon /></Tool>
              <Tool label="Pokaż"><FindIcon /></Tool>
              <Tool label="Usuń"><RemoveIcon /></Tool>
              <Tool label="Usuń zaznaczone"><RemoveMarkedIcon /></Tool>
              <Tool label="Parametry"><ParkIcon /></Tool>
            </Tools>
            <Tools $gap={6}>
              <Tool label="Szukaj"><BinocularsIcon /></Tool>
              <Tool label="Szukaj w tabeli"><TableFindIcon /></Tool>
              <Tool label="Filtr"><FilterIcon /></Tool>
              <Tool label="Podsumowanie"><FormulaIcon /></Tool>
            </Tools>
            <Tools $gap={14}>
              <Tool label="Ustawienia"><GearsIcon /></Tool>
              <ActionsMenu />
            </Tools>
          </Tools>
          <RightTools $gap={15}>
            <ReportTools $gap={17}>
              <Tool label="Wykres"><ChartIcon /></Tool>
              <Tool label="Arkusz"><SheetIcon /></Tool>
            </ReportTools>
            <NavigationTools />
          </RightTools>
        </ToolPanel>
      </FrontArea>
      <Footer>
        <PushButton $width={82} $off><CoinsIcon /><Key text="Pła_tność" /></PushButton>
        <PushButton $width={88}><NoteIcon /><Key text="_Uwagi" /></PushButton>
        <PushButton $width={88}><PrinterIcon /><Key text="_Drukuj" /></PushButton>
        <PushButton $width={88}><CheckIcon /><Key text="_OK" /></PushButton>
      </Footer>
    </FrontBody>
  </FrontWindow>
);

export default function App() {
  return (
    <Desktop>
      <Global />
      <Defs />
      <PostingWindow />
      <SettlementWindow />
    </Desktop>
  );
}
